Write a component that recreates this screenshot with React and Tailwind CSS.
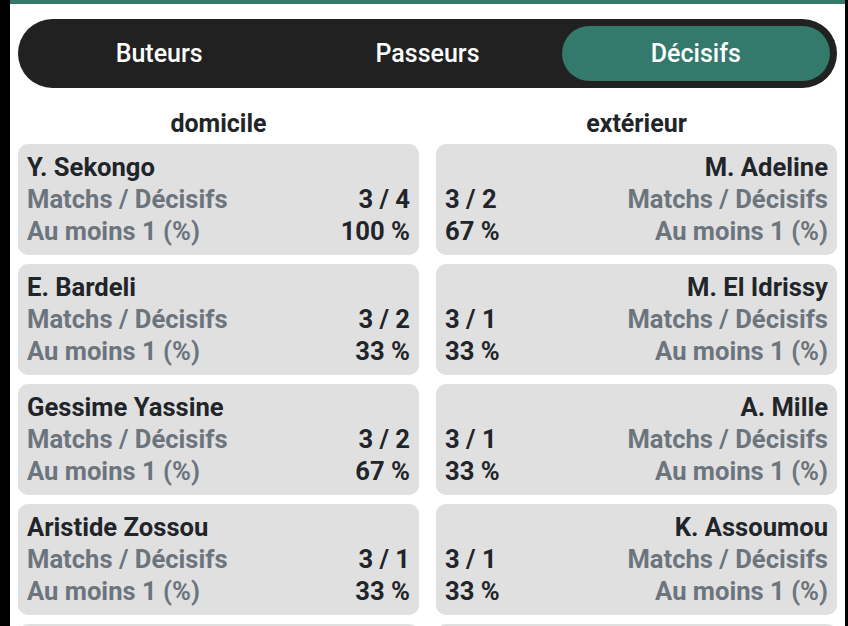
const domicile = [
  { nom: "Y. Sekongo", md: "3 / 4", pct: "100 %" },
  { nom: "E. Bardeli", md: "3 / 2", pct: "33 %" },
  { nom: "Gessime Yassine", md: "3 / 2", pct: "67 %" },
  { nom: "Aristide Zossou", md: "3 / 1", pct: "33 %" },
  { nom: "", md: "", pct: "" },
];

const exterieur = [
  { nom: "M. Adeline", md: "3 / 2", pct: "67 %" },
  { nom: "M. El Idrissy", md: "3 / 1", pct: "33 %" },
  { nom: "A. Mille", md: "3 / 1", pct: "33 %" },
  { nom: "K. Assoumou", md: "3 / 1", pct: "33 %" },
  { nom: "", md: "", pct: "" },
];

const tabs = ["Buteurs", "Passeurs", "Décisifs"];

function Carte({ joueur, droite }) {
  return (
    <div className="rounded-[10px] bg-[#e0e0e0] px-[9px] pt-[7px] pb-[8px] text-[25.6px] font-bold leading-[32px]">
      <div className={"h-[32px] text-[#212529] " + (droite ? "text-right" : "")}>{joueur.nom}</div>
      <div className={"flex justify-between " + (droite ? "flex-row-reverse" : "")}>
        <span className="text-[#6c757d]">Matchs / Décisifs</span>
        <span className="text-[#212529]">{joueur.md}</span>
      </div>
      <div className={"flex justify-between " + (droite ? "flex-row-reverse" : "")}>
        <span className="text-[#6c757d]">Au moins 1 (%)</span>
        <span className="text-[#212529]">{joueur.pct}</span>
      </div>
    </div>
  );
}

export default function App() {
  return (
    <div className="flex h-[626px] overflow-hidden bg-black" style={{ fontFamily: "Roboto, 'Noto Sans', sans-serif" }}>
      <div className="ml-[10px] mr-[3px] flex-1 bg-white">
        <div className="h-[4px] bg-[#347a6c]" />
        <div className="px-[8px]">
          <div className="mt-[15px] grid h-[69px] grid-cols-3 rounded-full bg-[#212121] p-[7px]">
            {tabs.map((t, i) => (
              <div
                key={t}
                className={
                  "flex items-center justify-center rounded-full text-[25px] font-medium text-white " +
                  (i === 2 ? "bg-[#347a6c]" : "")
                }
              >
                {t}
              </div>
            ))}
          </div>

          <div className="mt-[22px] grid grid-cols-2 gap-x-[17px]">
            <div className="h-[28px] text-center text-[25px] font-bold leading-[28px] text-[#212529]">domicile</div>
            <div className="h-[28px] text-center text-[25px] font-bold leading-[28px] text-[#212529]">extérieur</div>
          </div>

          <div className="mt-[6px] grid grid-cols-2 gap-x-[17px] gap-y-[9px]">
            {domicile.map((j, i) => (
              <div key={i} className="contents">
                <Carte joueur={j} />
                <Carte joueur={exterieur[i]} droite />
              </div>
            ))}
          </div>
        </div>
      </div>
    </div>
  );
}
